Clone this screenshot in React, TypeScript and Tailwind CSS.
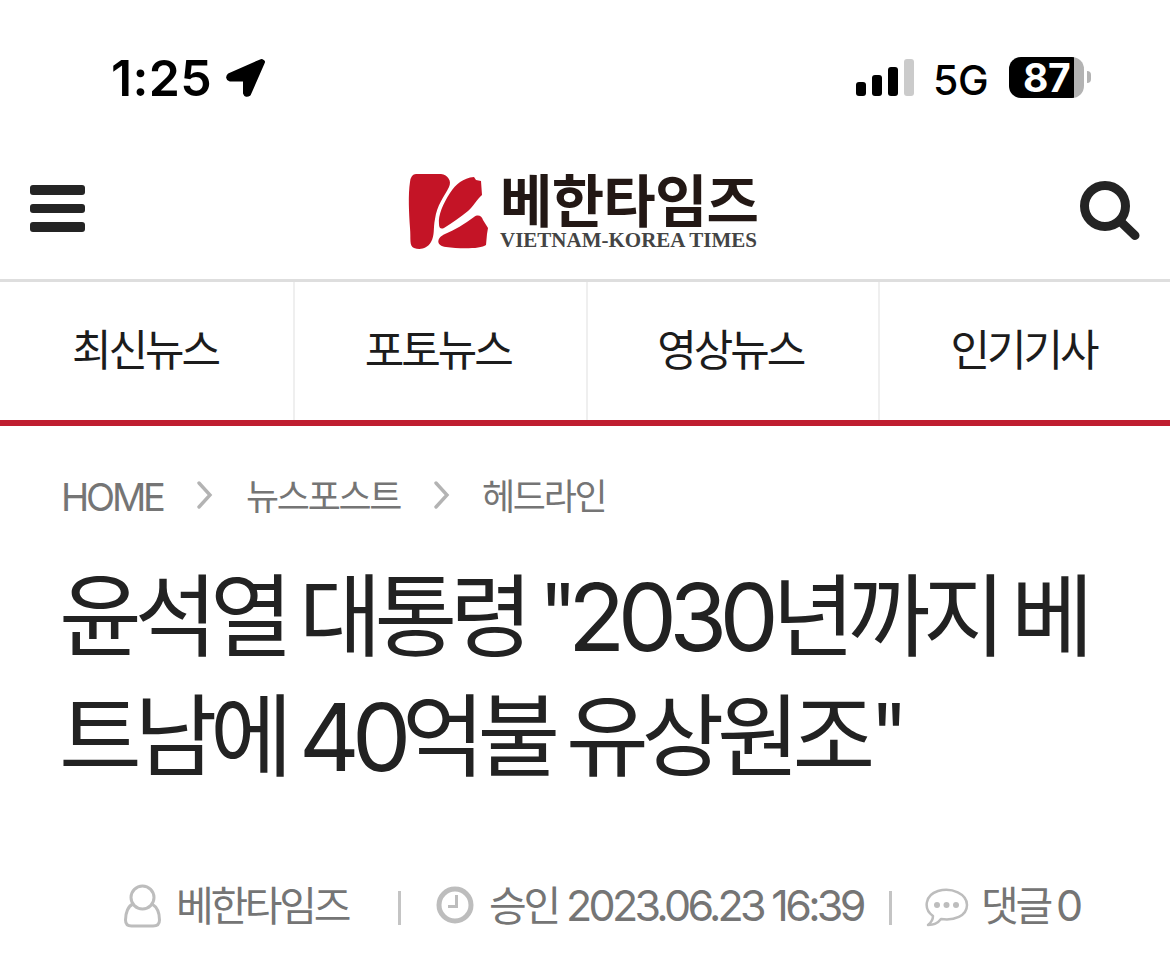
import type { ReactNode } from "react";

const tabs = ["최신뉴스", "포토뉴스", "영상뉴스", "인기기사"];

function Ko({ children, className }: { children: ReactNode; className: string }) {
  return (
    <span className={`font-['Noto_Sans_CJK_KR',sans-serif] ${className}`}>
      {children}
    </span>
  );
}

function StatusBar() {
  return (
    <div className="flex h-[156px] items-start pt-[48px] pl-[111px] text-black">
      <span className="w-[114px] text-[50px] leading-[60px] font-semibold tracking-[0.3px]">
        1:25
      </span>
      <svg className="mt-[10px] h-[41px] w-[41px]" viewBox="0 0 41 41">
        <path
          d="M36.5 3 L4.5 17 Q1.5 20 5 21.5 H20 V35 Q21 38 24 36 L38 4 Z"
          fill="black"
          stroke="black"
          strokeWidth="4"
          strokeLinejoin="round"
        />
      </svg>
      <svg className="mt-[11px] ml-[590px] h-[38px] w-[58px]" viewBox="0 0 58 38">
        <rect x="0" y="23" width="10" height="14" rx="3" />
        <rect x="16" y="16" width="10" height="21" rx="3" />
        <rect x="32" y="8" width="10" height="29" rx="3" />
        <rect x="48" y="0" width="10" height="37" rx="3" fill="#cbcbcb" />
      </svg>
      <span className="ml-[19px] w-[76px] text-[41px] leading-[64px] font-medium tracking-[-0.4px]">
        5G
      </span>
      <div className="mt-[9px] h-[41px] w-[75px] rounded-[12px] bg-[linear-gradient(90deg,#000_65px,#b3b3b3_65px)] pl-[14px] text-[39px] leading-[41px] font-bold tracking-[-0.5px] text-white">
        87
      </div>
      <div className="mt-[23px] ml-[3px] h-[12px] w-[4px] rounded-r-full bg-[#b3b3b3]" />
    </div>
  );
}

function Header() {
  return (
    <header className="flex h-[126px] items-start border-b-[3px] border-[#dedede] pl-[30px]">
      <div className="mt-[29px] flex w-[55px] flex-col gap-[9px]">
        <div className="h-[9.5px] rounded-[3px] bg-[#242424]" />
        <div className="h-[9.5px] rounded-[3px] bg-[#242424]" />
        <div className="h-[9.5px] rounded-[3px] bg-[#242424]" />
      </div>
      <svg className="mt-[17px] ml-[323px] h-[78px] w-[81px]" viewBox="0 0 81 78">
        <g fill="#c41426">
          <path d="M8 1 H33 C40 2 44 8 41 14 C36 24 29 32 27 46 C25 56 27 62 23 69 C19 76 12 77 6 75 C1 73 3 66 2 55 C1 40 0 22 2 9 Q3 1 8 1Z" />
          <path d="M31 51 C30 42 35 31 42 20 C48 11 55 5 66 4 L68 7 L73 8 L74 22 C68 27 66 33 60 38 C53 44 45 49 36 55 Q31 57 31 51Z" />
          <path d="M37 61 C46 57 57 51 66 44 C70 41 74 43 75 47 L80 55 L79 61 L78 72 C73 76 52 76 38 74 C28 73 28 65 37 61Z" />
        </g>
      </svg>
      <div className="ml-[11px] w-[260px] text-[#231815]">
        <Ko className="mt-[14px] block h-[58px] text-[57px] leading-[54px] font-bold tracking-[-0.8px] whitespace-nowrap">
          베한타임즈
        </Ko>
        <span className="block font-['Liberation_Serif',serif] text-[21px] leading-[24px] font-bold whitespace-nowrap text-[#444]">
          VIETNAM-KOREA TIMES
        </span>
      </div>
      <svg className="mt-[24px] ml-[320px] h-[62px] w-[61px]" viewBox="0 0 61 62">
        <circle cx="25" cy="26" r="20.5" fill="none" stroke="#242424" strokeWidth="9" />
        <path d="M41 42 L55 55.5" stroke="#242424" strokeWidth="9" strokeLinecap="round" />
      </svg>
    </header>
  );
}

function Tabs() {
  return (
    <nav className="grid h-[144px] grid-cols-[293px_292.5px_292.5px_1fr] border-b-[6px] border-[#bf1e30]">
      {tabs.map((tab) => (
        <div
          key={tab}
          className="flex justify-center border-l-2 border-[#efefef] pt-[35px] pr-[5px] first:border-l-0 first:pr-[3px] last:pr-[3px]"
        >
          <Ko className="text-[43px] leading-[60px] tracking-[-3px] text-[#1c1c1c]">
            {tab}
          </Ko>
        </div>
      ))}
    </nav>
  );
}

function Chevron() {
  return (
    <svg className="mt-[5px] h-[28px] w-[16px]" viewBox="0 0 16 28" fill="none">
      <path d="M2 2 L13 14 L2 26" stroke="#b3b3b3" strokeWidth="3.4" strokeLinecap="round" />
    </svg>
  );
}

function Breadcrumb() {
  return (
    <div className="flex h-[138px] items-start pt-[50px] pl-[61px] text-[#757575]">
      <span className="w-[136px] text-[38px] leading-[42px] tracking-[-3.2px]">HOME</span>
      <Chevron />
      <Ko className="ml-[33px] w-[188px] text-[36px] leading-[36px] tracking-[-2.3px]">
        뉴스포스트
      </Ko>
      <Chevron />
      <Ko className="ml-[32px] text-[36px] leading-[36px] tracking-[-2.3px]">헤드라인</Ko>
    </div>
  );
}

function Title() {
  return (
    <h1 className="h-[296px] pl-[59px] text-[#222]">
      <div className="flex h-[120px] text-[94px] leading-[107px] whitespace-nowrap">
        <Ko className="w-[240px] text-[90px] leading-[93px] tracking-[-7.3px]">윤석열</Ko>
        <Ko className="w-[240px] text-[90px] leading-[93px] tracking-[-7.3px]">대통령</Ko>
        <span className="w-[29px] text-[82px] leading-[100px] tracking-[-6px]">"</span>
        <span className="w-[204px] tracking-[-7.7px]">2030</span>
        <Ko className="w-[239px] text-[90px] leading-[93px] tracking-[-7.3px]">년까지</Ko>
        <Ko className="text-[90px] leading-[93px]">베</Ko>
      </div>
      <div className="flex h-[120px] text-[94px] leading-[107px] whitespace-nowrap">
        <Ko className="w-[240px] text-[90px] leading-[93px] tracking-[-7.3px]">트남에</Ko>
        <span className="w-[103px] tracking-[-7.7px]">40</span>
        <Ko className="w-[164px] text-[90px] leading-[93px] tracking-[-7.3px]">억불</Ko>
        <Ko className="w-[304px] text-[90px] leading-[93px] tracking-[-7.3px]">유상원조</Ko>
        <span className="text-[82px] leading-[100px]">"</span>
      </div>
    </h1>
  );
}

function Meta() {
  return (
    <div className="flex h-[110px] items-start pt-[18px] pl-[123px] text-[#757575]">
      <svg className="mt-[6px] h-[45px] w-[40px]" viewBox="0 0 40 45" fill="none" stroke="#bdbdbd" strokeWidth="3">
        <circle cx="19.5" cy="13.5" r="11.5" />
        <path d="M10 20 C5 22 2.5 29 2.5 36 Q2.5 42 8.5 42 H30 Q36.5 42 36.5 36 C36.5 28 34 23 29 20" />
      </svg>
      <Ko className="ml-[13px] w-[222px] text-[41px] leading-[50px] tracking-[-3.3px]">
        베한타임즈
      </Ko>
      <div className="mt-[13px] h-[34px] w-[3px] bg-[#c4c4c4]" />
      <svg className="mt-[8px] ml-[35px] h-[38px] w-[38px]" viewBox="0 0 38 38" fill="none" stroke="#bdbdbd">
        <circle cx="19" cy="19" r="16" strokeWidth="5" />
        <path d="M20.5 9 V20.5 H12" strokeWidth="3" />
      </svg>
      <Ko className="ml-[15px] w-[77px] text-[41px] leading-[50px] tracking-[-3.2px]">승인</Ko>
      <span className="w-[323px] text-[43px] leading-[55px] tracking-[-3.7px] whitespace-nowrap">
        2023.06.23 16:39
      </span>
      <div className="mt-[13px] h-[34px] w-[3px] bg-[#c4c4c4]" />
      <svg className="mt-[10px] ml-[33px] h-[42px] w-[44px]" viewBox="0 0 44 42">
        <path
          d="M8 28 C-2 21 0 7 13 3 C27 -1 42 6 42 17 C42 28 29 33 16 31 C13 35 8 37 3 37 Q8 33 8 28Z"
          fill="none"
          stroke="#bdbdbd"
          strokeWidth="2.5"
          strokeLinejoin="round"
        />
        <circle cx="12" cy="17" r="3" fill="#bdbdbd" />
        <circle cx="21.5" cy="17" r="3" fill="#bdbdbd" />
        <circle cx="31" cy="17" r="3" fill="#bdbdbd" />
      </svg>
      <Ko className="ml-[12px] w-[75px] text-[41px] leading-[50px] tracking-[-3.2px]">댓글</Ko>
      <span className="text-[43px] leading-[55px]">0</span>
    </div>
  );
}

export default function App() {
  return (
    <div className="h-[970px] w-[1170px] overflow-hidden bg-white font-['Inter','Noto_Sans_CJK_KR',sans-serif]">
      <StatusBar />
      <Header />
      <Tabs />
      <Breadcrumb />
      <Title />
      <Meta />
    </div>
  );
}
